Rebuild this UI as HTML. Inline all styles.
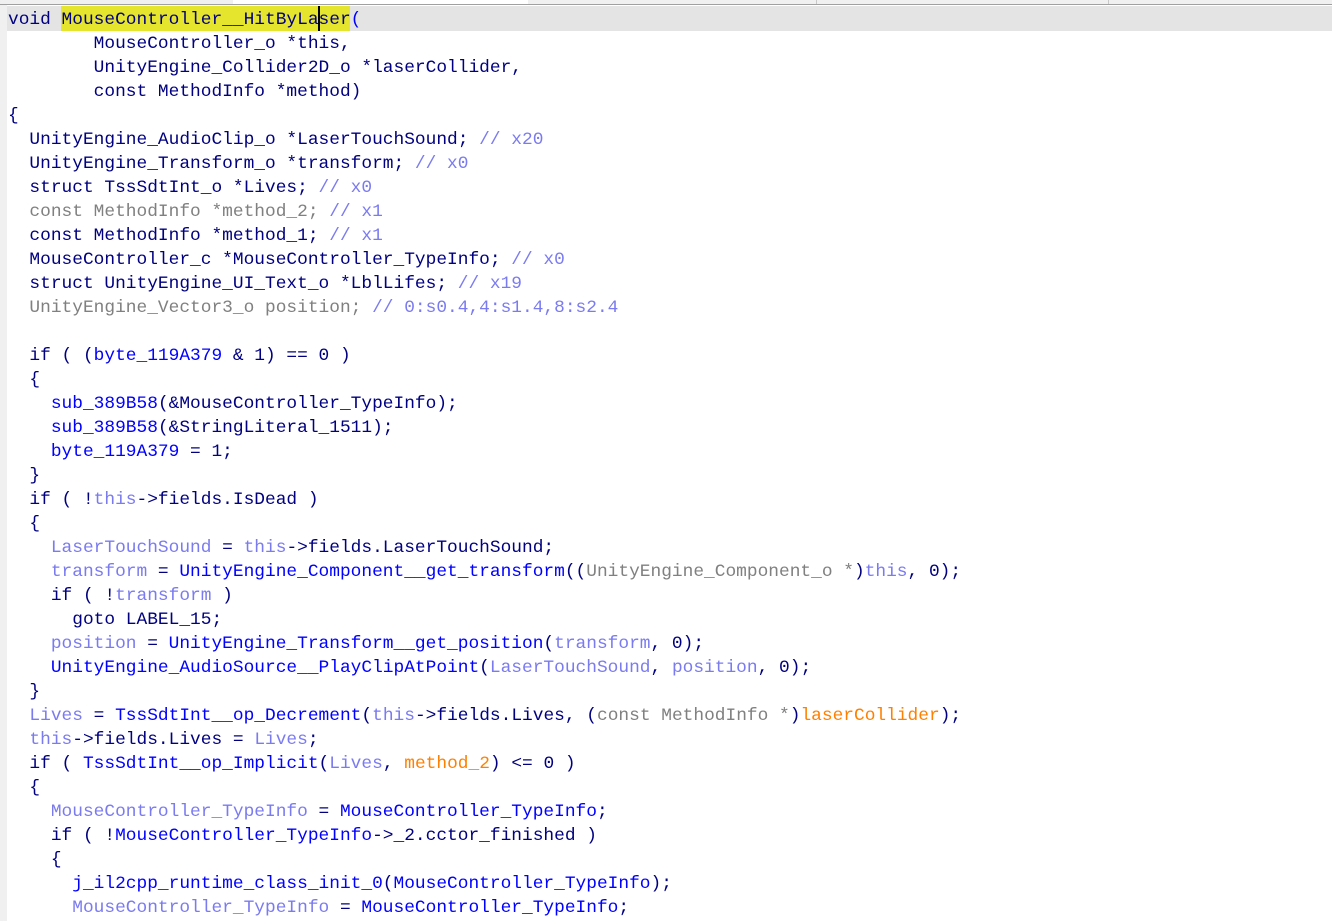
<!DOCTYPE html>
<html><head><meta charset="utf-8"><style>
html,body{margin:0;padding:0;background:#fff;width:1332px;height:921px;overflow:hidden;position:relative}
.top{position:absolute;left:0;top:0;width:1332px;height:4px;background:#f0f0f0;border-bottom:1px solid #a0a0a0}
.tab{position:absolute;left:233px;top:0;width:295px;height:4px;background:#fff}
.sep{position:absolute;top:0;width:1px;height:4px;background:#c8c8c8}
.gut{position:absolute;left:0;top:5px;width:7px;height:916px;background:#f0f0f0}
.hl{position:absolute;left:7px;top:6px;width:1325px;height:25px;background:#e4e4e4}
.yl{position:absolute;left:61px;top:6px;width:289px;height:25px;background:#e5e52e}
.cur{position:absolute;left:318px;top:6px;width:2px;height:25px;background:#000}
pre{position:absolute;left:8px;top:8px;margin:0;font-family:"Liberation Mono",monospace;font-size:17.85px;line-height:24px;color:#000080;white-space:pre}
.f{color:#0000ff}.v{color:#7b7bf0}.g{color:#808080}.c{color:#7b7bf0}.o{color:#ff8000}
</style></head><body>
<div class="top"></div><div class="tab"></div><div class="sep" style="left:816px"></div><div class="sep" style="left:1108px"></div>
<div class="gut"></div><div class="hl"></div><div class="yl"></div><div class="cur"></div>
<pre>void MouseController__HitByLaser<span class="f">(</span>
        MouseController_o *this,
        UnityEngine_Collider2D_o *laserCollider,
        const MethodInfo *method)
{
  UnityEngine_AudioClip_o *LaserTouchSound; <span class="c">// x20</span>
  UnityEngine_Transform_o *transform; <span class="c">// x0</span>
  struct TssSdtInt_o *Lives; <span class="c">// x0</span>
<span class="g">  const MethodInfo *method_2;</span> <span class="c">// x1</span>
  const MethodInfo *method_1; <span class="c">// x1</span>
  MouseController_c *MouseController_TypeInfo; <span class="c">// x0</span>
  struct UnityEngine_UI_Text_o *LblLifes; <span class="c">// x19</span>
<span class="g">  UnityEngine_Vector3_o position;</span> <span class="c">// 0:s0.4,4:s1.4,8:s2.4</span>

  if ( (<span class="f">byte_119A379</span> &amp; 1) == 0 )
  {
    <span class="f">sub_389B58</span>(&amp;MouseController_TypeInfo);
    <span class="f">sub_389B58</span>(&amp;StringLiteral_1511);
    <span class="f">byte_119A379</span> = 1;
  }
  if ( !<span class="v">this</span>-&gt;fields.IsDead )
  {
    <span class="v">LaserTouchSound</span> = <span class="v">this</span>-&gt;fields.LaserTouchSound;
    <span class="v">transform</span> = <span class="f">UnityEngine_Component__get_transform</span>((<span class="g">UnityEngine_Component_o *</span>)<span class="v">this</span>, 0);
    if ( !<span class="v">transform</span> )
      goto LABEL_15;
    <span class="v">position</span> = <span class="f">UnityEngine_Transform__get_position</span>(<span class="v">transform</span>, 0);
    <span class="f">UnityEngine_AudioSource__PlayClipAtPoint</span>(<span class="v">LaserTouchSound</span>, <span class="v">position</span>, 0);
  }
  <span class="v">Lives</span> = <span class="f">TssSdtInt__op_Decrement</span>(<span class="v">this</span>-&gt;fields.Lives, (<span class="g">const MethodInfo *</span>)<span class="o">laserCollider</span>);
  <span class="v">this</span>-&gt;fields.Lives = <span class="v">Lives</span>;
  if ( <span class="f">TssSdtInt__op_Implicit</span>(<span class="v">Lives</span>, <span class="o">method_2</span>) &lt;= 0 )
  {
    <span class="v">MouseController_TypeInfo</span> = <span class="f">MouseController_TypeInfo</span>;
    if ( !<span class="f">MouseController_TypeInfo</span>-&gt;_2.cctor_finished )
    {
      <span class="f">j_il2cpp_runtime_class_init_0</span>(<span class="f">MouseController_TypeInfo</span>);
      <span class="v">MouseController_TypeInfo</span> = <span class="f">MouseController_TypeInfo</span>;
</pre>
</body></html>
